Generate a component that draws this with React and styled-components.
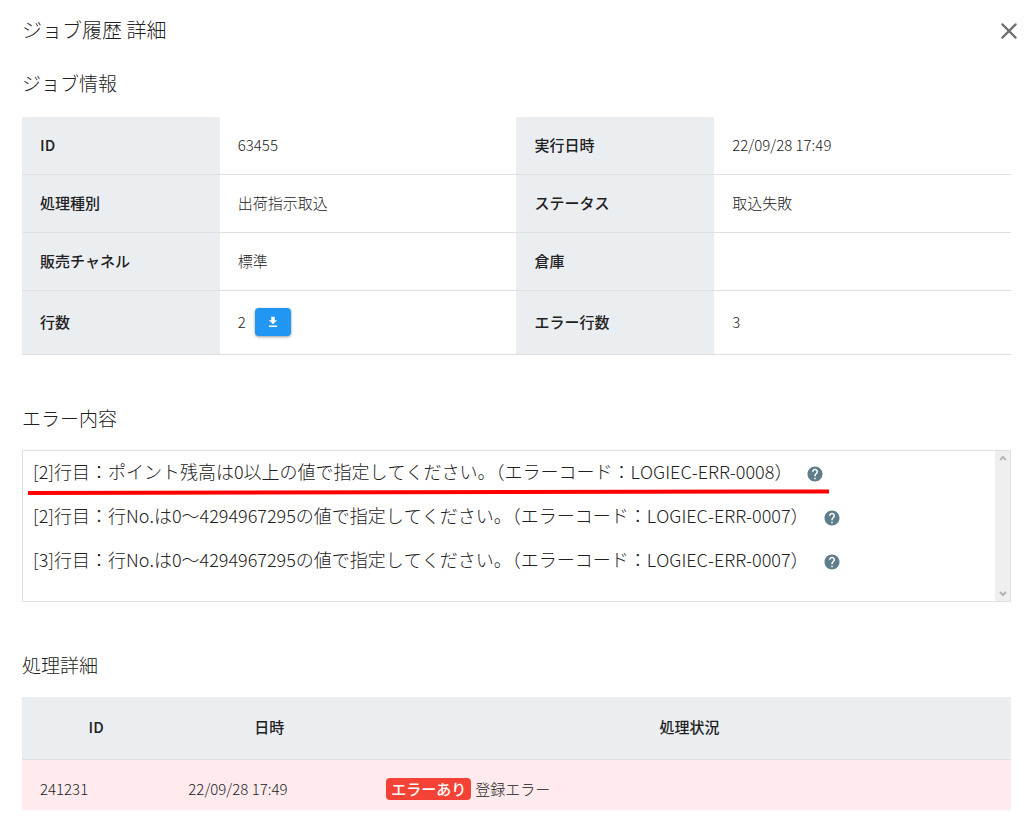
import styled, { createGlobalStyle, css } from 'styled-components';

const jobInfo = [
  [
    { label: 'ID', value: '63455' },
    { label: '実行日時', value: '22/09/28 17:49' },
  ],
  [
    { label: '処理種別', value: '出荷指示取込' },
    { label: 'ステータス', value: '取込失敗' },
  ],
  [
    { label: '販売チャネル', value: '標準' },
    { label: '倉庫', value: '' },
  ],
  [
    { label: '行数', value: '2', download: true },
    { label: 'エラー行数', value: '3' },
  ],
];

const errors = [
  {
    text: '[2]行目：ポイント残高は0以上の値で指定してください。（エラーコード：LOGIEC-ERR-0008）',
    marked: true,
  },
  {
    text: '[2]行目：行No.は0～4294967295の値で指定してください。（エラーコード：LOGIEC-ERR-0007）',
  },
  {
    text: '[3]行目：行No.は0～4294967295の値で指定してください。（エラーコード：LOGIEC-ERR-0007）',
  },
];

const details = [
  {
    id: '241231',
    date: '22/09/28 17:49',
    status: 'エラーあり',
    message: '登録エラー',
  },
];

const App = () => {
  return (
    <>
      <GlobalStyle />
      <Modal>
        <Header>
          <Title>ジョブ履歴 詳細</Title>
          <CloseButton type="button" aria-label="閉じる">
            <svg width="16" height="16" viewBox="0 0 16 16">
              <path
                d="M1.4 1.4 14.6 14.6M14.6 1.4 1.4 14.6"
                stroke="currentColor"
                strokeWidth="2.2"
                strokeLinecap="round"
              />
            </svg>
          </CloseButton>
        </Header>

        <SectionTitle>ジョブ情報</SectionTitle>
        <Table>
          <tbody>
            {jobInfo.map((row) => (
              <InfoRow key={row[0].label}>
                {row.map((item) => (
                  <InfoItem key={item.label} {...item} />
                ))}
              </InfoRow>
            ))}
          </tbody>
        </Table>

        <SectionTitle $spaced>エラー内容</SectionTitle>
        <ErrorBox>
          <ErrorList>
            {errors.map(({ text, marked }, index) => (
              <ErrorLine key={index}>
                {text}
                <HelpButton type="button" aria-label="ヘルプ">
                  <svg width="18" height="18" viewBox="0 0 24 24">
                    <path
                      fill="currentColor"
                      d="M12 2C6.48 2 2 6.48 2 12s4.48 10 10 10 10-4.48 10-10S17.52 2 12 2zm1 17h-2v-2h2v2zm2.07-7.75-.9.92C13.45 12.9 13 13.5 13 15h-2v-.5c0-1.1.45-2.1 1.17-2.83l1.24-1.26c.37-.36.59-.86.59-1.41 0-1.1-.9-2-2-2s-2 .9-2 2H8c0-2.21 1.79-4 4-4s4 1.79 4 4c0 .88-.36 1.68-.93 2.25z"
                    />
                  </svg>
                </HelpButton>
                {marked && (
                  <Marker viewBox="0 0 800 6" preserveAspectRatio="none">
                    <path d="M0 4 800 2.4" stroke="#ff0000" strokeWidth="4" />
                  </Marker>
                )}
              </ErrorLine>
            ))}
          </ErrorList>
          <ScrollTrack>
            <svg width="8" height="6" viewBox="0 0 8 6">
              <path d="M1 5 4 2 7 5" />
            </svg>
            <svg width="8" height="6" viewBox="0 0 8 6">
              <path d="M1 1 4 4 7 1" />
            </svg>
          </ScrollTrack>
        </ErrorBox>

        <SectionTitle $spaced>処理詳細</SectionTitle>
        <Table>
          <thead>
            <tr>
              <DetailHead $width="15%">ID</DetailHead>
              <DetailHead $width="20%">日時</DetailHead>
              <DetailHead $width="65%">処理状況</DetailHead>
            </tr>
          </thead>
          <tbody>
            {details.map(({ id, date, status, message }) => (
              <DetailRow key={id}>
                <td>{id}</td>
                <td>{date}</td>
                <td>
                  <Badge>{status}</Badge>
                  {message}
                </td>
              </DetailRow>
            ))}
          </tbody>
        </Table>
      </Modal>
    </>
  );
};

const InfoItem = ({ label, value, download }) => (
  <>
    <InfoHead scope="row">{label}</InfoHead>
    <InfoCell>
      <Value>
        {value}
        {download && (
          <DownloadButton type="button" aria-label="ダウンロード">
            <svg width="14" height="14" viewBox="0 0 24 24">
              <path
                fill="currentColor"
                d="M19 9h-4V3H9v6H5l7 7 7-7zM5 18v2.5h14V18H5z"
              />
            </svg>
          </DownloadButton>
        )}
      </Value>
    </InfoCell>
  </>
);

const GlobalStyle = createGlobalStyle`
  * {
    box-sizing: border-box;
  }

  body {
    margin: 0;
    background: #fff;
    color: #212121;
    font-family: 'Noto Sans CJK JP', sans-serif;
    font-size: 15px;
    font-weight: 300;
    font-kerning: none;
    line-height: 22px;
  }
`;

const Modal = styled.main`
  padding: 16px 24px 6px 22px;
`;

const Header = styled.header`
  display: flex;
  justify-content: space-between;
  align-items: center;
  height: 30px;
`;

const Title = styled.h1`
  margin: 0;
  padding-bottom: 2px;
  font-size: 20px;
  font-weight: 300;
  line-height: 28px;
`;

const CloseButton = styled.button`
  display: flex;
  margin-right: -6px;
  padding: 0;
  border: 0;
  background: none;
  color: #707070;
  cursor: pointer;
`;

const SectionTitle = styled.h2`
  margin: ${({ $spaced }) => ($spaced ? '49px 0 18px' : '23px 0 20px')};
  font-size: 19px;
  font-weight: 300;
  line-height: 28px;
`;

const Table = styled.table`
  width: 100%;
  table-layout: fixed;
  border-collapse: separate;
  border-spacing: 0;
`;

const headCell = css`
  background: #ebeef1;
  font-weight: 500;
`;

const InfoRow = styled.tr`
  th,
  td {
    padding: 17px 18px 18px;
    border-bottom: 1px solid #e0e0e0;
    text-align: left;
  }
`;

const InfoHead = styled.th`
  ${headCell}
  width: 20%;
`;

const InfoCell = styled.td`
  width: 30%;
`;

const Value = styled.div`
  display: flex;
  align-items: center;
  gap: 9px;
`;

const DownloadButton = styled.button`
  display: flex;
  justify-content: center;
  align-items: center;
  width: 36px;
  height: 28px;
  padding: 0;
  border: 0;
  border-radius: 4px;
  background: #2196f3;
  box-shadow: 0 1px 3px rgba(0, 0, 0, 0.4);
  color: #fff;
  cursor: pointer;
`;

const ErrorBox = styled.div`
  display: flex;
  border: 1px solid #e0e0e0;
`;

const ErrorList = styled.ul`
  flex: 1;
  margin: 0;
  padding: 0 10px 18px;
  list-style: none;
  font-size: 18px;
  line-height: 40px;
`;

const ErrorLine = styled.li`
  position: relative;
  display: flex;
  align-items: center;
  width: fit-content;
  height: 44px;
  padding-bottom: 4px;
`;

const HelpButton = styled.button`
  display: flex;
  margin-left: 14px;
  padding: 6px 0 0;
  border: 0;
  background: none;
  color: #607d8b;
  cursor: pointer;
`;

const Marker = styled.svg`
  position: absolute;
  left: -5px;
  bottom: 0;
  width: calc(100% + 10px);
  height: 6px;
`;

const ScrollTrack = styled.div`
  display: flex;
  flex-direction: column;
  justify-content: space-between;
  align-items: center;
  width: 15px;
  padding: 4px 0;
  background: #efefef;

  path {
    fill: none;
    stroke: #b5b5b5;
    stroke-width: 2;
  }
`;

const DetailHead = styled.th`
  ${headCell}
  width: ${({ $width }) => $width};
  padding: 19px 18px 21px;
  border-bottom: 1px solid #dcdfe1;
  text-align: center;
`;

const DetailRow = styled.tr`
  background: #ffebee;

  td {
    padding: 18px 18px 10px;
  }
`;

const Badge = styled.span`
  display: inline-block;
  margin-right: 4px;
  padding: 0 5px;
  border-radius: 4px;
  background: #f44336;
  color: #fff;
  font-weight: 500;
`;

export default App;
